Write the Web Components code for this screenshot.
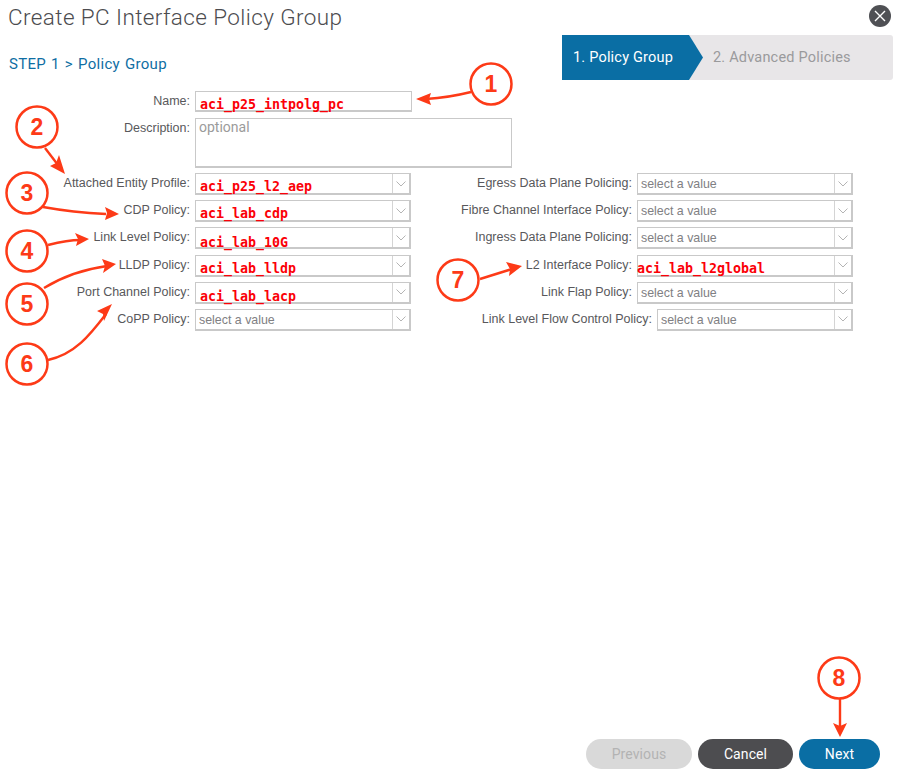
<!DOCTYPE html>
<html>
<head>
<meta charset="utf-8">
<title>Create PC Interface Policy Group</title>
<style>
  html, body { margin: 0; background: #fff; }
  body { font-family: "Liberation Sans", Arial, sans-serif; }
</style>
</head>
<body>
<policy-dialog>
  <wizard-steps slot="steps" active="1. Policy Group" next="2. Advanced Policies"></wizard-steps>

  <form-field slot="top" label="Name:"><text-box value="aci_p25_intpolg_pc" w="217"></text-box></form-field>
  <form-field slot="top" label="Description:"><text-box placeholder="optional" w="317" h="50"></text-box></form-field>

  <form-field slot="left" label="Attached Entity Profile:"><select-box value="aci_p25_l2_aep"></select-box></form-field>
  <form-field slot="left" label="CDP Policy:"><select-box value="aci_lab_cdp"></select-box></form-field>
  <form-field slot="left" label="Link Level Policy:"><select-box value="aci_lab_10G" drop="2"></select-box></form-field>
  <form-field slot="left" label="LLDP Policy:"><select-box value="aci_lab_lldp"></select-box></form-field>
  <form-field slot="left" label="Port Channel Policy:"><select-box value="aci_lab_lacp" drop="1"></select-box></form-field>
  <form-field slot="left" label="CoPP Policy:"><select-box></select-box></form-field>

  <form-field slot="right" label="Egress Data Plane Policing:"><select-box></select-box></form-field>
  <form-field slot="right" label="Fibre Channel Interface Policy:"><select-box></select-box></form-field>
  <form-field slot="right" label="Ingress Data Plane Policing:"><select-box></select-box></form-field>
  <form-field slot="right" label="L2 Interface Policy:"><select-box value="aci_lab_l2global" flush></select-box></form-field>
  <form-field slot="right" label="Link Flap Policy:"><select-box></select-box></form-field>
  <form-field slot="right" label="Link Level Flow Control Policy:"><select-box w="196"></select-box></form-field>

  <pill-button slot="footer" kind="off" w="106">Previous</pill-button>
  <pill-button slot="footer" kind="dark" w="95">Cancel</pill-button>
  <pill-button slot="footer" kind="main" w="81">Next</pill-button>
</policy-dialog>

<callout-layer></callout-layer>

<script>
class PolicyDialog extends HTMLElement {
  constructor() {
    super();
    this.attachShadow({ mode: 'open' });
    this.shadowRoot.innerHTML = /*html*/ `
      <style>
        :host { display: flex; flex-direction: column; height: 780px; box-sizing: border-box; color: #58585b; }
        .head { display: flex; justify-content: space-between; padding: 4px 9px 0 8px; height: 35px; box-sizing: border-box; }
        h1 { margin: 0; font: 300 22.5px/26px Roboto, sans-serif; color: #4c4c4f; letter-spacing: .4px; }
        .close { width: 22px; height: 22px; border-radius: 50%; background: #4f5054; margin-top: 1px; }
        .close svg { display: block; }
        .bar { display: flex; justify-content: space-between; padding: 0 7px 0 9px; height: 45px; }
        .crumb { font: 15px/18px Roboto, sans-serif; color: #0f6ea3; padding-top: 20px; letter-spacing: .3px; word-spacing: 1px; }
        .top { display: flex; flex-direction: column; gap: 6px; margin-top: 11px; }
        .cols { display: grid; grid-template-columns: 411px 442px; margin-top: 5px; }
        .col { display: flex; flex-direction: column; gap: 5.2px; }
        .foot { margin-top: auto; display: flex; justify-content: flex-end; gap: 6px; padding: 0 20px 11px 0; }
      </style>
      <div class="head">
        <h1>Create PC Interface Policy Group</h1>
        <div class="close"><svg width="22" height="22" viewBox="0 0 22 22"><path d="M6 6l10 10M16 6L6 16" stroke="#fff" stroke-width="1.4" fill="none"/></svg></div>
      </div>
      <div class="bar">
        <div class="crumb">STEP 1 &gt; Policy Group</div>
        <slot name="steps"></slot>
      </div>
      <div class="top"><slot name="top"></slot></div>
      <div class="cols">
        <div class="col"><slot name="left"></slot></div>
        <div class="col"><slot name="right"></slot></div>
      </div>
      <div class="foot"><slot name="footer"></slot></div>
    `;
  }
}

class WizardSteps extends HTMLElement {
  constructor() {
    super();
    this.attachShadow({ mode: 'open' });
  }
  connectedCallback() {
    this.shadowRoot.innerHTML = /*html*/ `
      <style>
        :host { display: block; width: 331px; height: 45px; background: #e8e6e8; border-radius: 0 3px 3px 0; position: relative; font: 14.5px/45px Roboto, sans-serif; }
        .on { position: absolute; left: 0; top: 0; width: 141px; height: 45px; background: #0a6ea4; color: #fff; box-sizing: border-box; padding-left: 11px;
              clip-path: polygon(0 0, 127px 0, 141px 50%, 127px 100%, 0 100%); letter-spacing: .2px; }
        .off { position: absolute; left: 151px; top: 0; color: #9a9a9c; letter-spacing: .2px; }
      </style>
      <div class="on">${ this.getAttribute('active') }</div>
      <div class="off">${ this.getAttribute('next') }</div>
    `;
  }
}

class FormField extends HTMLElement {
  constructor() {
    super();
    this.attachShadow({ mode: 'open' });
  }
  connectedCallback() {
    this.shadowRoot.innerHTML = /*html*/ `
      <style>
        :host { display: flex; justify-content: flex-end; gap: 5px; }
        :host([slot="top"]) { justify-content: flex-start; }
        :host([slot="top"]) label { width: 190px; }
        label { font: 12.5px/21px "Liberation Sans", Arial, sans-serif; color: #58585b; text-align: right; white-space: nowrap; }
      </style>
      <label>${ this.getAttribute('label') }</label>
      <slot></slot>
    `;
  }
}

class TextBox extends HTMLElement {
  constructor() {
    super();
    this.attachShadow({ mode: 'open' });
  }
  connectedCallback() {
    const value = this.getAttribute('value');
    const w = this.getAttribute('w');
    const h = this.getAttribute('h') || 21;
    this.shadowRoot.innerHTML = /*html*/ `
      <style>
        :host { display: block; box-sizing: border-box; width: ${ w }px; height: ${ h }px; border: 1px solid #c9c9c9; border-bottom-width: 2px; }
        .val { font: bold 13.3px/21px "DejaVu Sans Mono", monospace; color: #fb0007; padding: 2px 0 0 4px; }
        .hint { font: 14px/16px Roboto, sans-serif; color: #9b9b9b; padding: 0 0 0 3px; }
      </style>
      ${ value ? `<div class="val">${ value }</div>` : `<div class="hint">${ this.getAttribute('placeholder') }</div>` }
    `;
  }
}

class SelectBox extends HTMLElement {
  constructor() {
    super();
    this.attachShadow({ mode: 'open' });
  }
  connectedCallback() {
    const value = this.getAttribute('value');
    const w = this.getAttribute('w') || 216;
    const pad = this.hasAttribute('flush') ? 0 : 4;
    const drop = this.getAttribute('drop') || 0;
    this.shadowRoot.innerHTML = /*html*/ `
      <style>
        :host { display: flex; box-sizing: border-box; width: ${ w }px; height: 22px; border: 1px solid #c9c9c9; border-bottom-width: 2px; border-right-width: 2px; }
        .txt { flex: 1; min-width: 0; }
        .val { font: bold 13.3px/17px "DejaVu Sans Mono", monospace; color: #fb0007; padding: ${ 4 + +drop }px 0 0 ${ pad }px; margin-left: ${ pad ? 0 : -1 }px; white-space: nowrap; }
        .hint { font: 12.4px/19px "Liberation Sans", Arial, sans-serif; color: #808083; padding: 1px 0 0 3px; }
        .arrow { width: 16px; border-left: 1px solid #d4d4d4; display: flex; align-items: center; justify-content: center; }
      </style>
      <div class="txt">${ value ? `<div class="val">${ value }</div>` : `<div class="hint">select a value</div>` }</div>
      <div class="arrow"><svg width="10" height="6" viewBox="0 0 10 6"><path d="M.5.5L5 5 9.5.5" fill="none" stroke="#b4b4b4" stroke-width="1"/></svg></div>
    `;
  }
}

class PillButton extends HTMLElement {
  constructor() {
    super();
    this.attachShadow({ mode: 'open' });
  }
  connectedCallback() {
    const colors = {
      off: ['#d9d9d9', '#b3b3b3'],
      dark: ['#4d4d50', '#fff'],
      main: ['#0a6ea4', '#fff']
    }[this.getAttribute('kind')];
    this.shadowRoot.innerHTML = /*html*/ `
      <style>
        :host { display: block; width: ${ this.getAttribute('w') }px; height: 30px; border-radius: 15px; background: ${ colors[0] }; color: ${ colors[1] };
                font: 14px/30px Roboto, sans-serif; text-align: center; letter-spacing: .1px; }
      </style>
      <slot></slot>
    `;
  }
}

// numbered red annotations drawn on top of the screenshot
const CALLOUTS = [
  { n: 1, x: 491, y: 84 },
  { n: 2, x: 37, y: 127 },
  { n: 3, x: 27, y: 193 },
  { n: 4, x: 27, y: 251 },
  { n: 5, x: 27, y: 304 },
  { n: 6, x: 27, y: 364 },
  { n: 7, x: 458, y: 280 },
  { n: 8, x: 839, y: 678 }
];

// line path, then arrow head polygon
const ARROWS = [
  ['M471 92C455 96 442 98 426 99', '416,99 431,93 429,99 431,105'],
  ['M45 148L58 165', '65,174 50,166 56,163 59,155'],
  ['M43 207C65 211 85 213 106 214', '119,214 105,207 107,213 105,220'],
  ['M48 245C60 242 68 240 80 240', '89,239 75,233 78,239 76,246'],
  ['M44 288C62 277 85 269 107 266', '116,264 102,259 105,266 103,273'],
  ['M48 360C75 354 90 335 106 314', '112,304 97,311 103,314 104,321'],
  ['M480 279L512 269', '522,266 506,262 510,269 509,276'],
  ['M840 699V726', '840,737 833,723 840,726 847,723']
];

class CalloutLayer extends HTMLElement {
  constructor() {
    super();
    this.attachShadow({ mode: 'open' });
  }
  connectedCallback() {
    const lines = ARROWS.map(a => `<path d="${ a[0] }" fill="none" stroke="#fd3a17" stroke-width="2.4"/><polygon points="${ a[1] }" fill="#fd3a17"/>`).join('');
    const rings = CALLOUTS.map(c => `
      <circle cx="${ c.x }" cy="${ c.y }" r="20.5" fill="#fff" stroke="#fd3a17" stroke-width="2.5"/>
      <text x="${ c.x }" y="${ c.y + 8 }" text-anchor="middle">${ c.n }</text>`).join('');
    this.shadowRoot.innerHTML = /*html*/ `
      <style>
        :host { display: block; position: absolute; left: 0; top: 0; width: 900px; height: 780px; pointer-events: none; }
        text { font: bold 23px "Liberation Sans", Arial, sans-serif; fill: #fd3a17; }
      </style>
      <svg width="900" height="780" viewBox="0 0 900 780">${ lines }${ rings }</svg>
    `;
  }
}

customElements.define('policy-dialog', PolicyDialog);
customElements.define('wizard-steps', WizardSteps);
customElements.define('form-field', FormField);
customElements.define('text-box', TextBox);
customElements.define('select-box', SelectBox);
customElements.define('pill-button', PillButton);
customElements.define('callout-layer', CalloutLayer);
</script>
</body>
</html>
